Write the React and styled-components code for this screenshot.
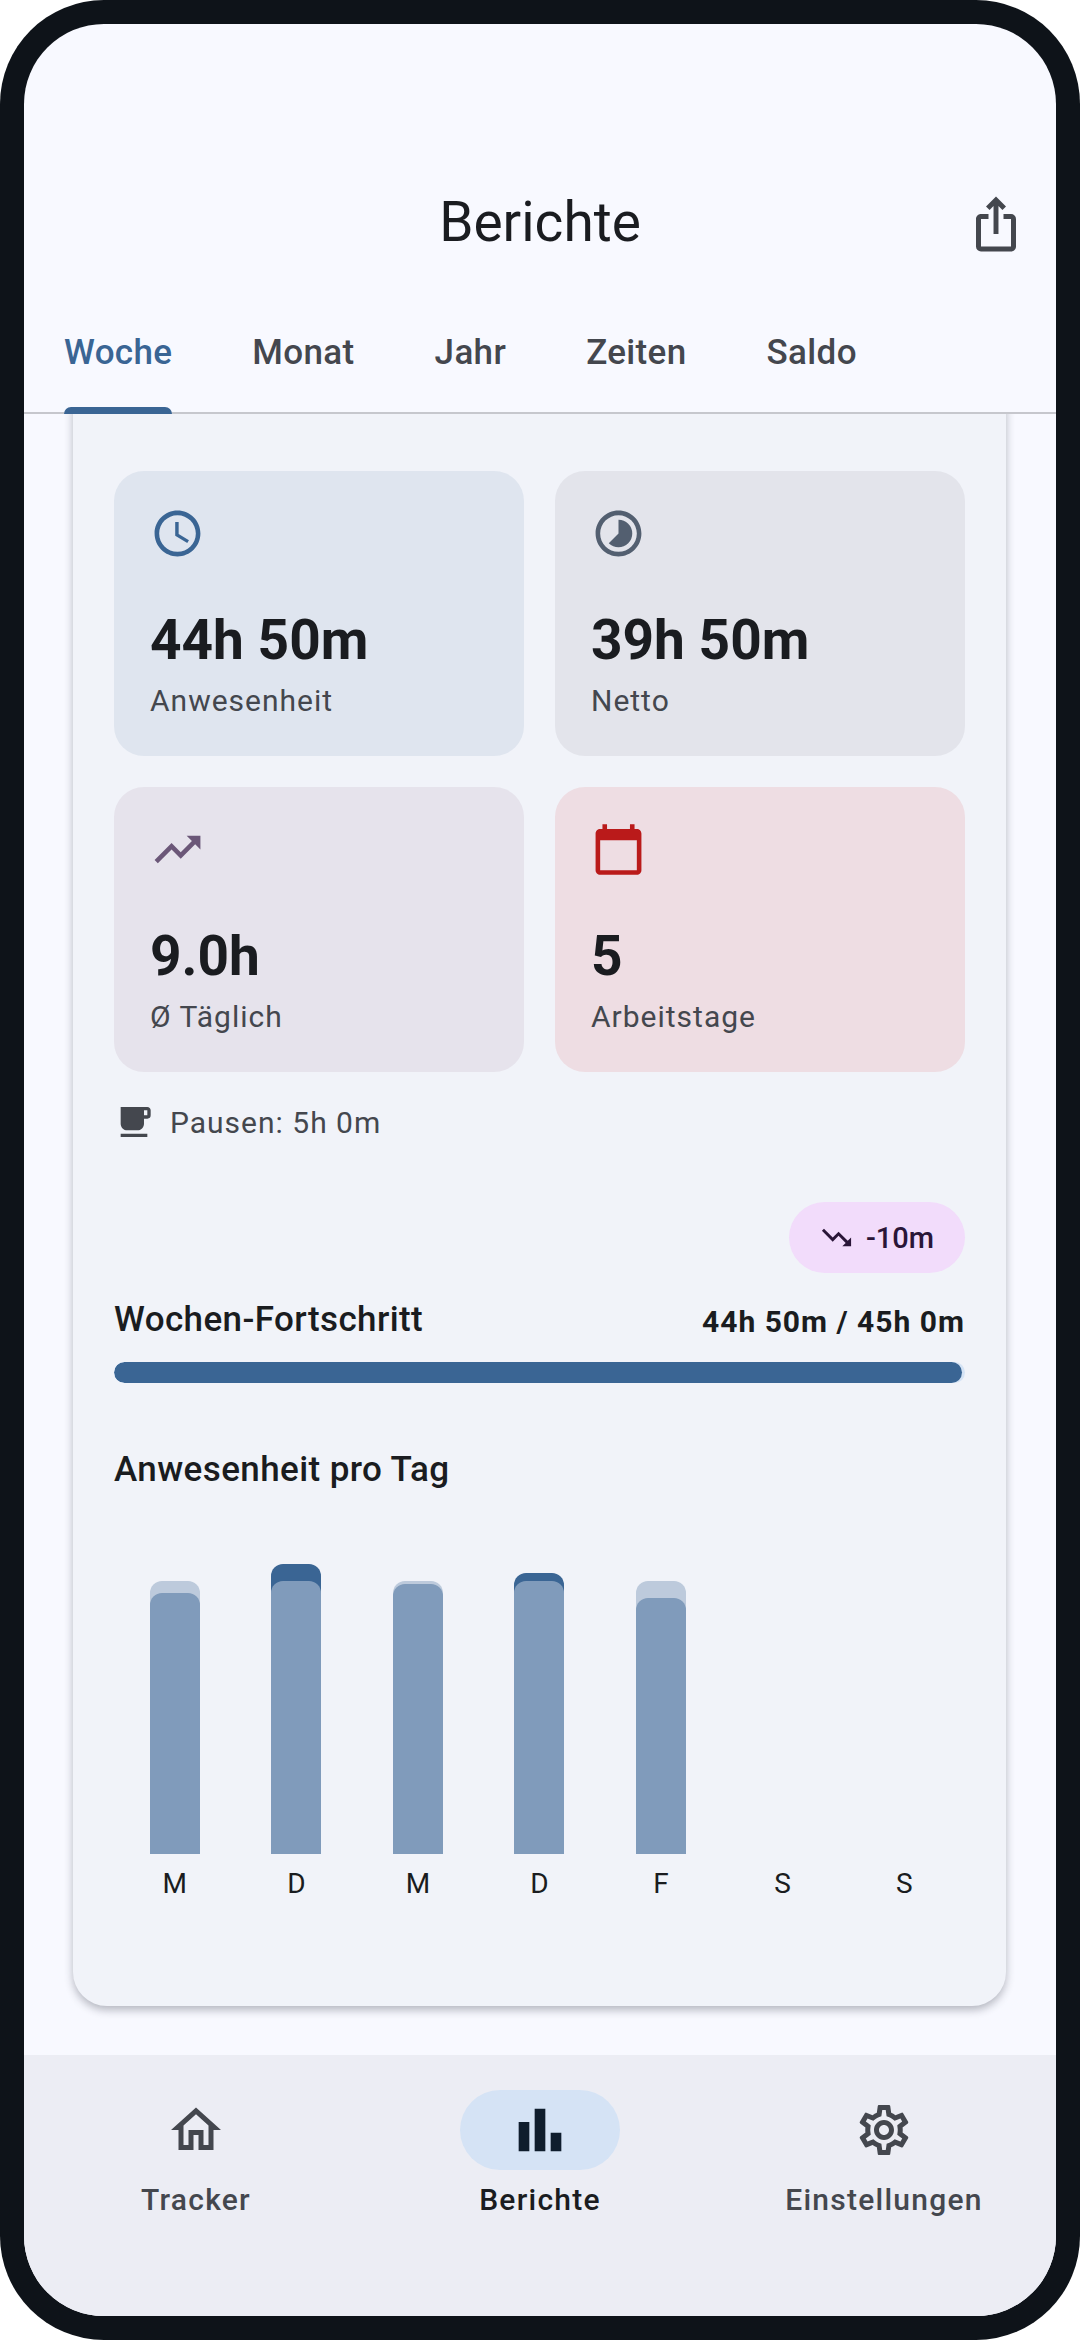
import React from "react";
import styled, { createGlobalStyle } from "styled-components";
import {
  MdOutlineIosShare, MdSchedule, MdTimelapse, MdTrendingUp, MdTrendingDown,
  MdCalendarToday, MdFreeBreakfast, MdOutlineHome, MdBarChart, MdOutlineSettings,
} from "react-icons/md";

const Global = createGlobalStyle`
  html, body { margin: 0; padding: 0; background: #fff; }
  * { box-sizing: border-box; }
  body { font-family: Roboto, "Noto Sans", sans-serif; }
`;

const Frame = styled.div`
  width: 1080px; height: 2340px; padding: 24px;
  background: #0e1319; border-radius: 104px; overflow: hidden;
`;
const Screen = styled.div`
  width: 100%; height: 100%; display: flex; flex-direction: column;
  background: #f8f9ff; border-radius: 80px; overflow: hidden;
`;
const AppBar = styled.header`
  position: relative; flex: none; height: 270px; padding: 138px 0 12px;
  display: flex; justify-content: center;
`;
const Title = styled.h1`
  margin: 0; font-size: 55px; line-height: 120px; font-weight: 400; color: #1a1c20;
`;
const ShareButton = styled.div`
  position: absolute; right: 30px; top: 170px; width: 60px; height: 60px;
  color: #44474e; display: flex;
`;
const TabBar = styled.nav`
  flex: none; height: 120px; padding-left: 40px; display: flex; gap: 80px;
  border-bottom: 2px solid #c6c7cd;
`;
const Tab = styled.div`
  position: relative; height: 120px; line-height: 118px; font-size: 35px; font-weight: 500;
  letter-spacing: 0.35px;
  color: ${(p) => (p.$active ? "#3a6594" : "#44474e")};
  ${(p) => p.$active && `
    &::after {
      content: ""; position: absolute; left: 0; right: 0; bottom: 0; height: 7px;
      background: #3a6594; border-radius: 7px 7px 0 0;
    }
  `}
`;
const Content = styled.main`
  flex: 1; min-height: 0; padding: 0 50px 0 49px; overflow: hidden;
`;
const Card = styled.section`
  margin-top: -40px; padding: 97px 41px 102px; background: #f1f3f9; border-radius: 34px;
  box-shadow: 0 4px 8px rgba(40, 44, 60, 0.32);
`;
const StatGrid = styled.div`
  display: grid; grid-template-columns: 410px 410px; gap: 31px;
`;
const StatCard = styled.div`
  height: 285px; padding: 35px 36px 0; border-radius: 30px; background: ${(p) => p.$bg};
`;
const StatIcon = styled.div`
  width: 55px; height: 55px; display: flex; color: ${(p) => p.$color};
`;
const StatValue = styled.div`
  margin-top: 47px; font-size: 55px; line-height: 65px; font-weight: 700; color: #1a1c20;
`;
const StatLabel = styled.div`
  margin-top: 8px; font-size: 30px; line-height: 40px; letter-spacing: 1px; color: #44474e;
`;
const PauseRow = styled.div`
  margin-top: 30px; height: 40px; display: flex; align-items: center; gap: 16px;
  font-size: 30px; letter-spacing: 1px; color: #44474e;
`;
const ChipRow = styled.div`
  margin-top: 60px; display: flex; justify-content: flex-end;
`;
const Chip = styled.div`
  height: 71px; padding: 0 31px 0 30px; display: flex; align-items: center; gap: 12px;
  border-radius: 36px; background: #f2dcfb; color: #2a1638;
  font-size: 29px; font-weight: 500;
`;
const ProgressHead = styled.div`
  margin-top: 22px; display: flex; justify-content: space-between; align-items: flex-end;
`;
const SectionTitle = styled.div`
  font-size: 35px; line-height: 50px; font-weight: 500; letter-spacing: 0.4px; color: #1a1c20;
  margin-top: ${(p) => p.$top || 0}px;
`;
const ProgressValue = styled.div`
  font-size: 30px; line-height: 46px; font-weight: 700; letter-spacing: 1px; color: #1a1c20;
`;
const Track = styled.div`
  margin-top: 17px; height: 21px; border-radius: 11px; background: #d5e3f5; overflow: hidden;
`;
const Fill = styled.div`
  height: 100%; border-radius: 11px; background: #3a6594;
`;
const Chart = styled.div`
  display: grid; grid-template-columns: repeat(7, 1fr);
`;
const Day = styled.div`
  display: flex; flex-direction: column; align-items: center;
`;
const BarBox = styled.div`
  position: relative; width: 50px; height: 359px;
`;
const BarLayer = styled.div`
  position: absolute; left: 0; right: 0; bottom: 0; border-radius: 12px 12px 0 0;
  background: ${(p) => (p.$target ? "rgba(162, 182, 206, 0.67)" : "#3a6594")};
`;
const DayLabel = styled.div`
  margin-top: 10px; font-size: 28px; line-height: 40px; color: #1a1c20;
`;
const BottomNav = styled.nav`
  flex: none; height: 261px; padding-top: 35px; background: #ecedf4;
  display: grid; grid-template-columns: repeat(3, 1fr); align-items: start;
`;
const NavItem = styled.div`
  display: flex; flex-direction: column; align-items: center;
`;
const NavPill = styled.div`
  width: 160px; height: 80px; border-radius: 40px;
  display: flex; align-items: center; justify-content: center;
  background: ${(p) => (p.$active ? "#d5e3f5" : "transparent")};
  color: ${(p) => (p.$active ? "#0f1d2d" : "#44474e")};
`;
const NavLabel = styled.div`
  margin-top: 10px; font-size: 30px; line-height: 40px; font-weight: 500; letter-spacing: 1.25px;
  color: ${(p) => (p.$active ? "#1a1c20" : "#44474e")};
`;

const stats = [
  { Icon: MdSchedule, value: "44h 50m", label: "Anwesenheit", bg: "#dfe5ef", color: "#3a6594" },
  { Icon: MdTimelapse, value: "39h 50m", label: "Netto", bg: "#e3e4eb", color: "#535f70" },
  { Icon: MdTrendingUp, value: "9.0h", label: "Ø Täglich", bg: "#e6e3ec", color: "#6b5778" },
  { Icon: MdCalendarToday, value: "5", label: "Arbeitstage", bg: "#eedde3", color: "#ba1a1a" },
];
const TARGET = 273;
const days = [
  { label: "M", h: 261 }, { label: "D", h: 290 }, { label: "M", h: 270 },
  { label: "D", h: 281 }, { label: "F", h: 256 }, { label: "S", h: 0 }, { label: "S", h: 0 },
];

export default function App() {
  return (
    <>
      <Global />
      <Frame>
        <Screen>
          <AppBar>
            <Title>Berichte</Title>
            <ShareButton><MdOutlineIosShare size={60} /></ShareButton>
          </AppBar>
          <TabBar>
            <Tab $active>Woche</Tab>
            <Tab>Monat</Tab>
            <Tab>Jahr</Tab>
            <Tab>Zeiten</Tab>
            <Tab>Saldo</Tab>
          </TabBar>
          <Content>
            <Card>
              <StatGrid>
                {stats.map(({ Icon, value, label, bg, color }) => (
                  <StatCard key={label} $bg={bg}>
                    <StatIcon $color={color}><Icon size={55} /></StatIcon>
                    <StatValue>{value}</StatValue>
                    <StatLabel>{label}</StatLabel>
                  </StatCard>
                ))}
              </StatGrid>
              <PauseRow><MdFreeBreakfast size={40} />Pausen: 5h 0m</PauseRow>
              <ChipRow>
                <Chip><MdTrendingDown size={35} />-10m</Chip>
              </ChipRow>
              <ProgressHead>
                <SectionTitle>Wochen-Fortschritt</SectionTitle>
                <ProgressValue>44h 50m / 45h 0m</ProgressValue>
              </ProgressHead>
              <Track><Fill style={{ width: `${(2690 / 2700) * 100}%` }} /></Track>
              <SectionTitle $top={62}>Anwesenheit pro Tag</SectionTitle>
              <Chart>
                {days.map((d, i) => (
                  <Day key={i}>
                    <BarBox>
                      {d.h > 0 && <BarLayer style={{ height: d.h }} />}
                      {d.h > 0 && <BarLayer $target style={{ height: TARGET }} />}
                    </BarBox>
                    <DayLabel>{d.label}</DayLabel>
                  </Day>
                ))}
              </Chart>
            </Card>
          </Content>
          <BottomNav>
            <NavItem>
              <NavPill><MdOutlineHome size={60} /></NavPill>
              <NavLabel>Tracker</NavLabel>
            </NavItem>
            <NavItem>
              <NavPill $active><MdBarChart size={64} /></NavPill>
              <NavLabel $active>Berichte</NavLabel>
            </NavItem>
            <NavItem>
              <NavPill><MdOutlineSettings size={60} /></NavPill>
              <NavLabel>Einstellungen</NavLabel>
            </NavItem>
          </BottomNav>
        </Screen>
      </Frame>
    </>
  );
}
